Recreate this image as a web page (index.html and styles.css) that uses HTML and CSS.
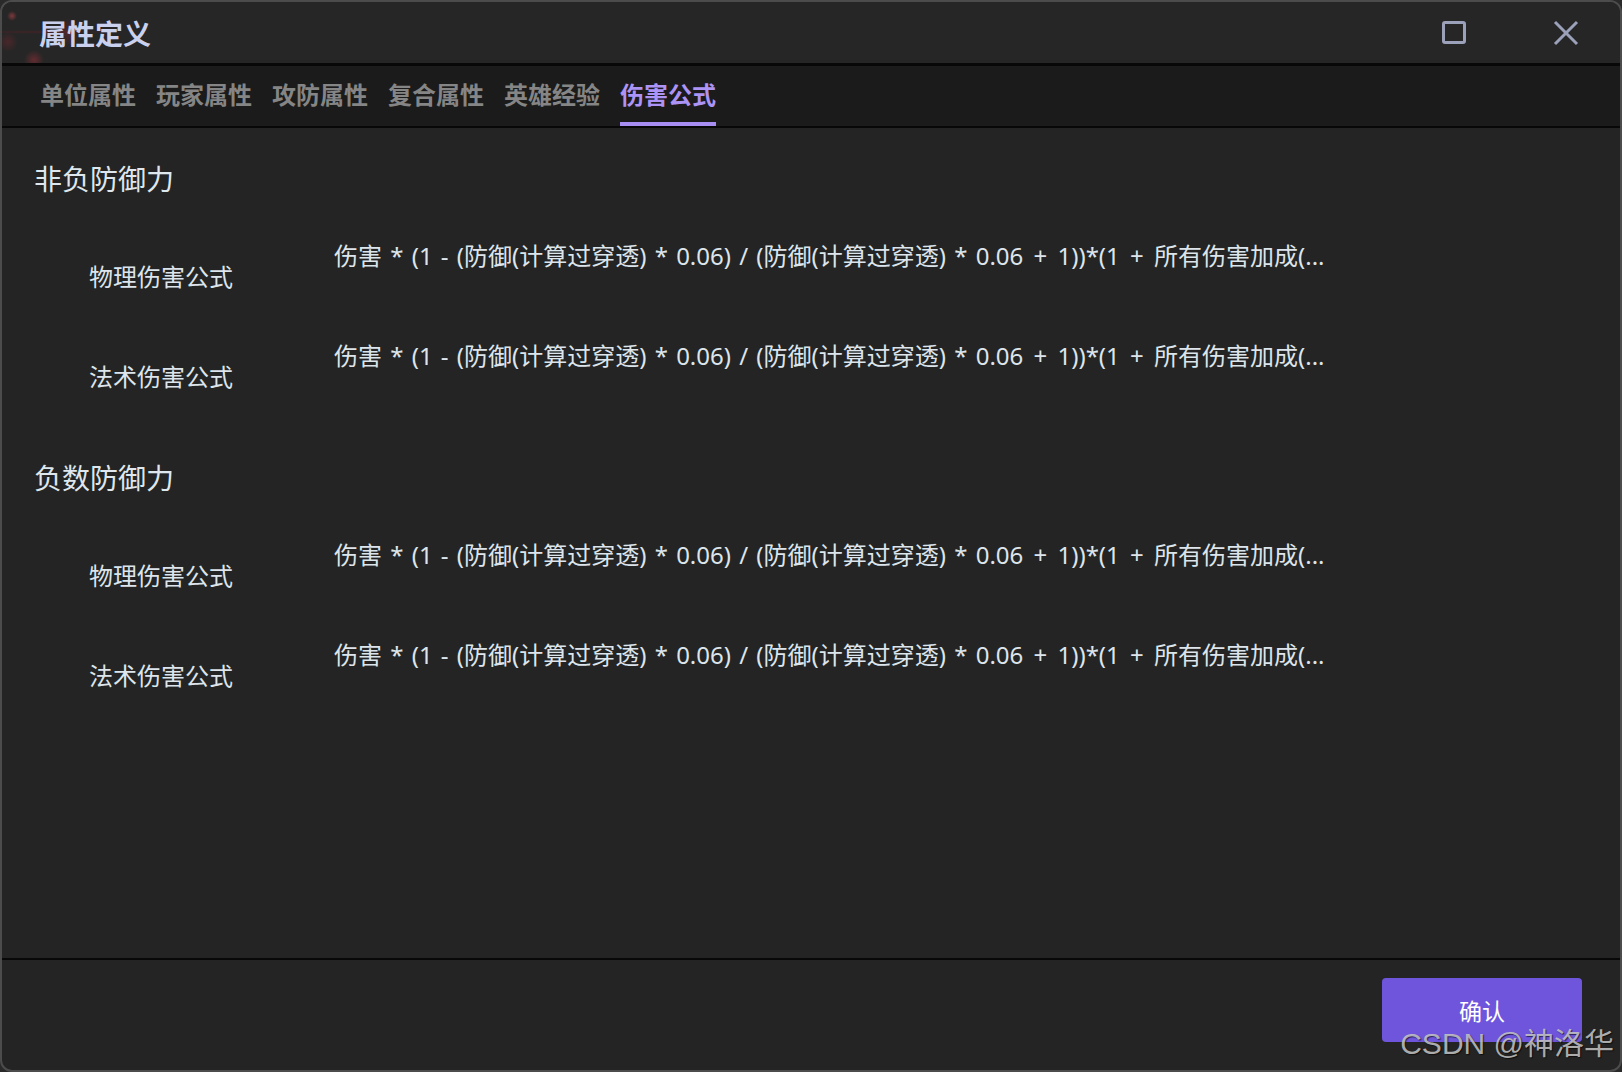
FILE: index.html
```html
<!DOCTYPE html>
<html lang="zh-CN">
<head>
<meta charset="utf-8">
<title>属性定义</title>
<link rel="stylesheet" href="styles.css">
</head>
<body>
<div class="window">
  <header class="titlebar">
    <div class="title">属性定义</div>
    <div class="controls">
      <button class="ctrl" aria-label="maximize">
        <svg width="24" height="24" viewBox="0 0 24 24"><rect x="1.5" y="1.5" width="21" height="20" rx="1.5" fill="none" stroke="#9ba1b9" stroke-width="3"/></svg>
      </button>
      <button class="ctrl" aria-label="close">
        <svg width="26" height="26" viewBox="0 0 26 26"><path d="M2 2 L24 24 M24 2 L2 24" fill="none" stroke="#9ba1b9" stroke-width="3"/></svg>
      </button>
    </div>
  </header>
  <nav class="tabs">
    <div class="tab">单位属性</div>
    <div class="tab">玩家属性</div>
    <div class="tab">攻防属性</div>
    <div class="tab">复合属性</div>
    <div class="tab">英雄经验</div>
    <div class="tab active">伤害公式</div>
  </nav>
  <main class="content">
    <section class="section">
      <h2 class="heading">非负防御力</h2>
      <div class="row">
        <div class="label">物理伤害公式</div>
        <div class="formula">伤害 * (1 - (防御(计算过穿透) * 0.06) / (防御(计算过穿透) * 0.06 <span class="op">+</span> 1))*(1 <span class="op">+</span> 所有伤害加成(...</div>
      </div>
      <div class="row">
        <div class="label">法术伤害公式</div>
        <div class="formula">伤害 * (1 - (防御(计算过穿透) * 0.06) / (防御(计算过穿透) * 0.06 <span class="op">+</span> 1))*(1 <span class="op">+</span> 所有伤害加成(...</div>
      </div>
    </section>
    <section class="section second">
      <h2 class="heading">负数防御力</h2>
      <div class="row">
        <div class="label">物理伤害公式</div>
        <div class="formula">伤害 * (1 - (防御(计算过穿透) * 0.06) / (防御(计算过穿透) * 0.06 <span class="op">+</span> 1))*(1 <span class="op">+</span> 所有伤害加成(...</div>
      </div>
      <div class="row">
        <div class="label">法术伤害公式</div>
        <div class="formula">伤害 * (1 - (防御(计算过穿透) * 0.06) / (防御(计算过穿透) * 0.06 <span class="op">+</span> 1))*(1 <span class="op">+</span> 所有伤害加成(...</div>
      </div>
    </section>
  </main>
  <footer class="footer">
    <button class="confirm">确认</button>
  </footer>
  <div class="watermark">CSDN @神洛华</div>
</div>
</body>
</html>
```
FILE: styles.css
```css
html, body {
  margin: 0;
  padding: 0;
  background: #2a2a2a;
}
body {
  font-family: "Noto Sans", "Noto Sans CJK SC", sans-serif;
  width: 1622px;
  height: 1072px;
  overflow: hidden;
}
.window {
  position: relative;
  box-sizing: border-box;
  width: 1622px;
  height: 1072px;
  border: 2px solid #4c4c4c;
  border-radius: 12px;
  background: #242424;
  overflow: hidden;
  display: flex;
  flex-direction: column;
}
.titlebar {
  height: 61px;
  flex: none;
  display: flex;
  align-items: center;
  justify-content: space-between;
  border-bottom: 3px solid #080808;
  background:
    radial-gradient(circle at 10px 14px, rgba(200, 70, 80, 0.55) 0, rgba(200, 70, 80, 0) 5px),
    radial-gradient(circle at 32px 58px, rgba(170, 50, 60, 0.45) 0, rgba(170, 50, 60, 0) 10px),
    radial-gradient(circle at 66px 30px, rgba(150, 40, 50, 0.35) 0, rgba(150, 40, 50, 0) 14px),
    radial-gradient(circle at 6px 40px, rgba(140, 40, 50, 0.35) 0, rgba(140, 40, 50, 0) 10px),
    radial-gradient(ellipse at 40px 30px, rgba(90, 30, 38, 0.55) 0, rgba(90, 30, 38, 0) 90px),
    #262626;
}
.title {
  padding-left: 37px;
  font-family: "Noto Sans CJK SC", sans-serif;
  font-size: 28px;
  font-weight: 700;
  color: #c9d1ee;
  line-height: 40px;
}
.controls {
  display: flex;
  align-items: center;
  gap: 86px;
  padding-right: 41px;
}
.ctrl {
  background: none;
  border: none;
  padding: 0;
  width: 26px;
  height: 26px;
  display: flex;
  align-items: center;
  justify-content: center;
}
.tabs {
  flex: none;
  height: 60px;
  display: flex;
  gap: 20px;
  padding-left: 38px;
  background: #1b1b1b;
  border-bottom: 2px solid #080808;
}
.tab {
  box-sizing: border-box;
  height: 60px;
  padding-bottom: 2px;
  border-bottom: 4px solid transparent;
  display: flex;
  align-items: center;
  font-family: "Noto Sans CJK SC", sans-serif;
  font-size: 24px;
  font-weight: 700;
  color: #858585;
}
.tab.active {
  color: #ac93f6;
  border-bottom-color: #a88ef2;
}
.content {
  flex: 1;
  padding: 30px 0 0 32px;
  color: #dde5ec;
  font-family: "Noto Sans", "Noto Sans CJK SC", sans-serif;
}
.section.second {
  margin-top: 21px;
}
.heading {
  margin: 0 0 38px 0;
  font-family: "Noto Sans CJK SC", sans-serif;
  font-size: 28px;
  font-weight: 400;
  line-height: 40px;
  color: #dfe7ee;
}
.row {
  height: 100px;
  display: flex;
  align-items: flex-start;
}
.label {
  box-sizing: border-box;
  width: 300px;
  padding-left: 55px;
  margin-top: 20px;
  font-family: "Noto Sans CJK SC", sans-serif;
  font-size: 24px;
  line-height: 40px;
  color: #dde5ec;
}
.formula {
  font-size: 24px;
  line-height: 40px;
  white-space: nowrap;
  word-spacing: 2px;
  color: #dde5ec;
}
.op {
  margin: 0 2px;
}
.footer {
  flex: none;
  height: 110px;
  border-top: 2px solid #080808;
  display: flex;
  justify-content: flex-end;
  align-items: flex-start;
  padding-right: 38px;
}
.confirm {
  margin-top: 18px;
  width: 200px;
  height: 64px;
  border: none;
  border-radius: 4px;
  background: #6e55dc;
  color: #ffffff;
  font-family: "Noto Sans CJK SC", sans-serif;
  font-size: 23px;
  padding: 0;
}
.watermark {
  position: absolute;
  right: 6px;
  bottom: 8px;
  font-family: "Liberation Sans", "Noto Sans CJK SC", sans-serif;
  font-size: 30px;
  line-height: 36px;
  color: rgba(200, 200, 200, 0.85);
  text-shadow: 1px 1px 1px rgba(0, 0, 0, 0.6);
}
```
